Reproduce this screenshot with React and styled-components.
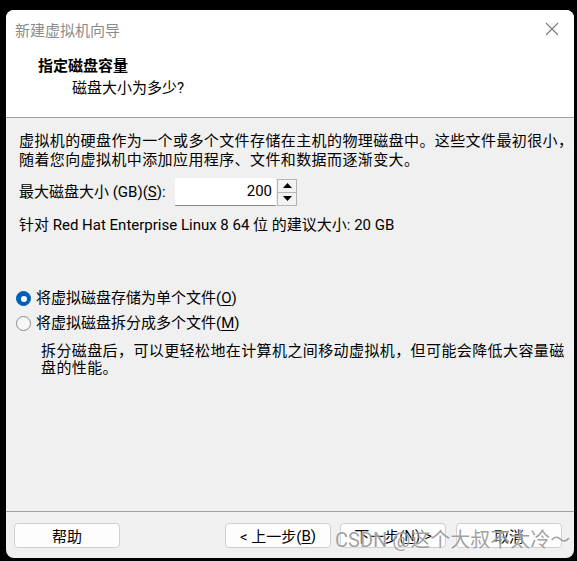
import React from 'react';
import styled, { createGlobalStyle } from 'styled-components';

const GlobalStyle = createGlobalStyle`
    html, body {
        margin: 0;
        padding: 0;
        background: #000000;
    }

    body {
        font-family: Roboto, "Noto Sans CJK SC", sans-serif;
        font-size: 15px;
        color: #000000;
    }
`;

const Page = styled.div`
    width: 577px;
    height: 561px;
    padding: 10px 3px 3px 6px;
    box-sizing: border-box;
`;

const Window = styled.div`
    position: relative;
    width: 568px;
    height: 548px;
    border-radius: 8px;
    overflow: hidden;
    background: #f0f0f0;
    display: flex;
    flex-direction: column;
`;

const TitleBar = styled.div`
    height: 38px;
    background: #ffffff;
    display: flex;
    align-items: center;
    justify-content: space-between;
    padding: 0 15px 0 9px;

    .title {
        color: #8c8c8c;
        font-size: 15px;
    }

    svg {
        width: 14px;
        height: 14px;
    }
`;

const Header = styled.div`
    height: 70px;
    background: #ffffff;
    border-bottom: 1px solid #a0a0a0;
    padding-top: 8px;
    box-sizing: border-box;

    h1 {
        margin: 0 0 0 32px;
        font-size: 15px;
        font-weight: 700;
        line-height: 20px;
    }

    p {
        margin: 2px 0 0 66px;
        font-size: 15px;
        line-height: 20px;
    }
`;

const Body = styled.div`
    flex: 1;
    padding: 14px 0 0 13px;
    line-height: 19px;

    .intro {
        margin: 0;
        letter-spacing: 0.4px;
    }
`;

const SizeRow = styled.div`
    display: flex;
    align-items: center;
    margin-top: 8px;
    height: 28px;

    label {
        width: 156px;
    }
`;

const NumberInput = styled.div`
    width: 101px;
    height: 28px;
    box-sizing: border-box;
    background: #ffffff;
    border-bottom: 1px solid #8a8a8a;
    text-align: right;
    padding-right: 4px;
    line-height: 27px;
`;

const Spinner = styled.div`
    display: flex;
    flex-direction: column;
    width: 20px;
    height: 27px;
    margin-left: 1px;
    border: 1px solid #b5b5b5;
    box-sizing: border-box;
`;

const SpinButton = styled.div`
    flex: 1;
    display: flex;
    align-items: center;
    justify-content: center;
    background: #f3f3f3;
    border-top: ${(p) => (p.$bottom ? '1px solid #b5b5b5' : 'none')};

    svg {
        width: 9px;
        height: 5px;
    }
`;

const Hint = styled.div`
    margin-top: 10px;
`;

const Options = styled.div`
    margin-top: 51px;
`;

const RadioRow = styled.div`
    display: flex;
    align-items: center;
    height: 25px;
    gap: 5px;
    margin-left: -3px;
`;

const Radio = styled.span`
    width: 15px;
    height: 15px;
    border-radius: 50%;
    box-sizing: border-box;
    display: flex;
    align-items: center;
    justify-content: center;
    background: ${(p) => (p.$checked ? '#005fb8' : '#f7f7f7')};
    border: 1px solid ${(p) => (p.$checked ? '#005fb8' : '#8a8a8a')};

    &::after {
        content: '';
        display: ${(p) => (p.$checked ? 'block' : 'none')};
        width: 6px;
        height: 6px;
        border-radius: 50%;
        background: #ffffff;
    }
`;

const Description = styled.p`
    margin: 7px 0 0 22px;
    width: 530px;
    line-height: 17px;
    letter-spacing: 0.4px;
`;

const Footer = styled.div`
    border-top: 1px solid #a0a0a0;
    padding: 11px 0 10px 8px;
    display: flex;
    align-items: center;
`;

const Button = styled.div`
    width: 106px;
    height: 25px;
    box-sizing: border-box;
    background: #fdfdfd;
    border: 1px solid #d0d0d0;
    border-radius: 4px;
    display: flex;
    align-items: center;
    justify-content: center;
    font-size: 15px;
    margin-right: ${(p) => p.$gap || 10}px;
`;

const Watermark = styled.div`
    position: absolute;
    left: 329px;
    bottom: 5px;
    font-size: 20px;
    color: rgba(130, 130, 130, 0.75);
    text-shadow: 0 0 2px #ffffff;
    white-space: nowrap;
    pointer-events: none;
`;

const Key = styled.u`
    text-underline-offset: 2px;
`;

const App = () => {
    return (
        <Page>
            <GlobalStyle />
            <Window>
                <TitleBar>
                    <span className='title'>新建虚拟机向导</span>
                    <svg viewBox='0 0 14 14'>
                        <path d='M1 1 L13 13 M13 1 L1 13' stroke='#7a7a7a' strokeWidth='1.1' />
                    </svg>
                </TitleBar>
                <Header>
                    <h1>指定磁盘容量</h1>
                    <p>磁盘大小为多少?</p>
                </Header>
                <Body>
                    <p className='intro'>
                        虚拟机的硬盘作为一个或多个文件存储在主机的物理磁盘中。这些文件最初很小，
                        <br />
                        随着您向虚拟机中添加应用程序、文件和数据而逐渐变大。
                    </p>
                    <SizeRow>
                        <label>最大磁盘大小 (GB)(<Key>S</Key>):</label>
                        <NumberInput>200</NumberInput>
                        <Spinner>
                            <SpinButton>
                                <svg viewBox='0 0 9 5'><path d='M0 5 L4.5 0 L9 5 Z' fill='#000' /></svg>
                            </SpinButton>
                            <SpinButton $bottom>
                                <svg viewBox='0 0 9 5'><path d='M0 0 L9 0 L4.5 5 Z' fill='#000' /></svg>
                            </SpinButton>
                        </Spinner>
                    </SizeRow>
                    <Hint>针对 Red Hat Enterprise Linux 8 64 位 的建议大小: 20 GB</Hint>
                    <Options>
                        <RadioRow>
                            <Radio $checked />
                            <span>将虚拟磁盘存储为单个文件(<Key>O</Key>)</span>
                        </RadioRow>
                        <RadioRow>
                            <Radio />
                            <span>将虚拟磁盘拆分成多个文件(<Key>M</Key>)</span>
                        </RadioRow>
                        <Description>
                            拆分磁盘后，可以更轻松地在计算机之间移动虚拟机，但可能会降低大容量磁盘的性能。
                        </Description>
                    </Options>
                </Body>
                <Footer>
                    <Button $gap={105}>帮助</Button>
                    <Button $gap={9}>&lt; 上一步(<Key>B</Key>)</Button>
                    <Button $gap={10}>下一步(<Key>N</Key>) &gt;</Button>
                    <Button>取消</Button>
                </Footer>
                <Watermark>CSDN @这个大叔不太冷～</Watermark>
            </Window>
        </Page>
    );
};

export default App;
